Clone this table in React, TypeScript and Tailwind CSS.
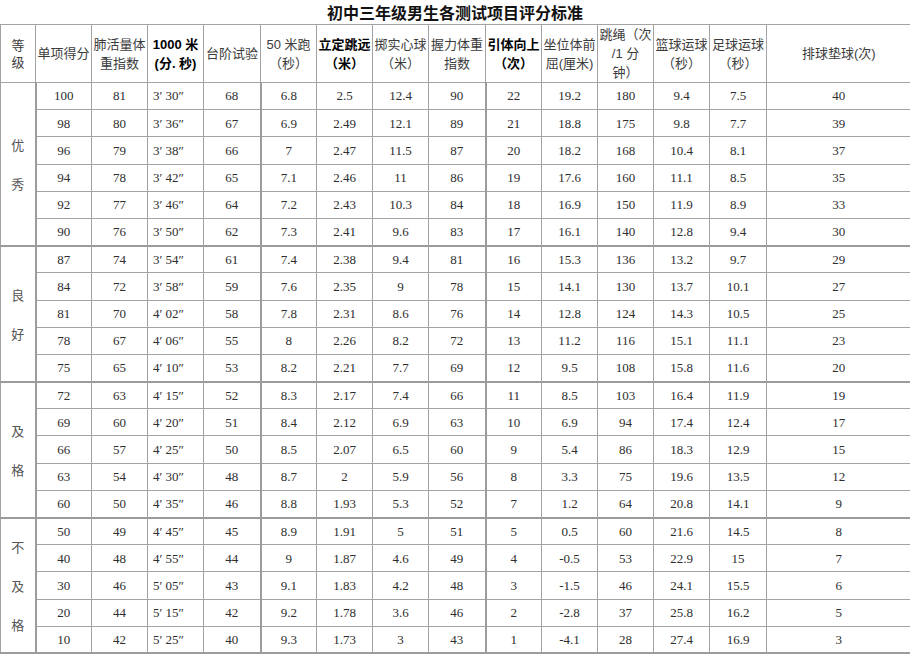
import type { ReactNode } from 'react'

type Group = {
  label: string[]
  rows: (string | number)[][]
}

const groups: Group[] = [
  {
    label: ['优', '秀'],
    rows: [
      [100, 81, '3′ 30″', 68, '6.8', '2.5', '12.4', 90, 22, '19.2', 180, '9.4', '7.5', 40],
      [98, 80, '3′ 36″', 67, '6.9', '2.49', '12.1', 89, 21, '18.8', 175, '9.8', '7.7', 39],
      [96, 79, '3′ 38″', 66, '7', '2.47', '11.5', 87, 20, '18.2', 168, '10.4', '8.1', 37],
      [94, 78, '3′ 42″', 65, '7.1', '2.46', '11', 86, 19, '17.6', 160, '11.1', '8.5', 35],
      [92, 77, '3′ 46″', 64, '7.2', '2.43', '10.3', 84, 18, '16.9', 150, '11.9', '8.9', 33],
      [90, 76, '3′ 50″', 62, '7.3', '2.41', '9.6', 83, 17, '16.1', 140, '12.8', '9.4', 30],
    ],
  },
  {
    label: ['良', '好'],
    rows: [
      [87, 74, '3′ 54″', 61, '7.4', '2.38', '9.4', 81, 16, '15.3', 136, '13.2', '9.7', 29],
      [84, 72, '3′ 58″', 59, '7.6', '2.35', '9', 78, 15, '14.1', 130, '13.7', '10.1', 27],
      [81, 70, '4′ 02″', 58, '7.8', '2.31', '8.6', 76, 14, '12.8', 124, '14.3', '10.5', 25],
      [78, 67, '4′ 06″', 55, '8', '2.26', '8.2', 72, 13, '11.2', 116, '15.1', '11.1', 23],
      [75, 65, '4′ 10″', 53, '8.2', '2.21', '7.7', 69, 12, '9.5', 108, '15.8', '11.6', 20],
    ],
  },
  {
    label: ['及', '格'],
    rows: [
      [72, 63, '4′ 15″', 52, '8.3', '2.17', '7.4', 66, 11, '8.5', 103, '16.4', '11.9', 19],
      [69, 60, '4′ 20″', 51, '8.4', '2.12', '6.9', 63, 10, '6.9', 94, '17.4', '12.4', 17],
      [66, 57, '4′ 25″', 50, '8.5', '2.07', '6.5', 60, 9, '5.4', 86, '18.3', '12.9', 15],
      [63, 54, '4′ 30″', 48, '8.7', '2', '5.9', 56, 8, '3.3', 75, '19.6', '13.5', 12],
      [60, 50, '4′ 35″', 46, '8.8', '1.93', '5.3', 52, 7, '1.2', 64, '20.8', '14.1', 9],
    ],
  },
  {
    label: ['不', '及', '格'],
    rows: [
      [50, 49, '4′ 45″', 45, '8.9', '1.91', '5', 51, 5, '0.5', 60, '21.6', '14.5', 8],
      [40, 48, '4′ 55″', 44, '9', '1.87', '4.6', 49, 4, '-0.5', 53, '22.9', '15', 7],
      [30, 46, '5′ 05″', 43, '9.1', '1.83', '4.2', 48, 3, '-1.5', 46, '24.1', '15.5', 6],
      [20, 44, '5′ 15″', 42, '9.2', '1.78', '3.6', 46, 2, '-2.8', 37, '25.8', '16.2', 5],
      [10, 42, '5′ 25″', 40, '9.3', '1.73', '3', 43, 1, '-4.1', 28, '27.4', '16.9', 3],
    ],
  },
]

function Head({ children, bold, last }: { children: ReactNode; bold?: boolean; last?: boolean }) {
  return (
    <th
      className={
        'border border-[#a3a3a3] p-0 text-center align-middle whitespace-nowrap text-[13px] leading-[19px] ' +
        (bold ? 'font-bold text-black ' : 'font-normal text-[#3c3c3c] ') +
        (last ? 'border-r-0' : '')
      }
    >
      {children}
    </th>
  )
}

function cellClass(j: number, first: boolean, lastRow: boolean) {
  let cls = 'border border-[#a3a3a3] p-0 align-middle whitespace-nowrap '
  cls += j === 2 ? 'text-left pl-[5px] ' : 'text-center '
  if (j === 0 || j === 4 || j === 8) cls += 'border-l-2 border-l-[#9c9c9c] '
  if (j === 13) cls += 'border-r-0 '
  if (first) cls += 'border-t-2 border-t-[#9c9c9c] '
  if (lastRow) cls += 'border-b-2 border-b-[#9c9c9c] '
  return cls
}

export default function App() {
  return (
    <div className="w-[910px] h-[655px] overflow-hidden bg-white font-['Liberation_Serif','Noto_Sans_CJK_SC',serif]">
      <h1 className="h-[24px] text-center text-[16px] leading-[24px] font-bold text-[#111] font-['Noto_Sans_CJK_SC',sans-serif]">
        初中三年级男生各测试项目评分标准
      </h1>

      <table className="table-fixed border-collapse w-[910px]">
        <colgroup>
          <col className="w-[35px]" />
          <col className="w-[56px]" />
          <col className="w-[56px]" />
          <col className="w-[56px]" />
          <col className="w-[57px]" />
          <col className="w-[56px]" />
          <col className="w-[56px]" />
          <col className="w-[56px]" />
          <col className="w-[57px]" />
          <col className="w-[56px]" />
          <col className="w-[56px]" />
          <col className="w-[56px]" />
          <col className="w-[56px]" />
          <col className="w-[57px]" />
          <col className="w-[144px]" />
        </colgroup>
        <thead className="font-['Liberation_Sans','Noto_Sans_CJK_SC',sans-serif]">
          <tr className="h-[58px]">
            <th className="border border-[#a3a3a3] p-0 text-center align-middle text-[13px] leading-[17px] font-normal text-[#3c3c3c]">
              等<br />级
            </th>
            <Head>单项得分</Head>
            <Head>肺活量体<br />重指数</Head>
            <Head bold>1000 米<br />(分. 秒)</Head>
            <Head>台阶试验</Head>
            <Head>50 米跑<br />（秒）</Head>
            <Head bold>立定跳远<br />（米）</Head>
            <Head>掷实心球<br />（米）</Head>
            <Head>握力体重<br />指数</Head>
            <Head bold>引体向上<br />（次）</Head>
            <Head>坐位体前<br />屈(厘米)</Head>
            <Head>跳绳（次<br />/1 分<br />钟）</Head>
            <Head>篮球运球<br />（秒）</Head>
            <Head>足球运球<br />（秒）</Head>
            <Head last>排球垫球(次)</Head>
          </tr>
        </thead>
        <tbody className="text-[13px] text-[#2e2e2e]">
          {groups.map((g, gi) =>
            g.rows.map((row, ri) => {
              const first = ri === 0 && gi > 0
              const lastRow = gi === groups.length - 1 && ri === g.rows.length - 1
              return (
                <tr key={`${gi}-${ri}`} className="h-[27.2px]">
                  {ri === 0 && (
                    <td
                      rowSpan={g.rows.length}
                      className={
                        'border border-[#a3a3a3] p-0 text-center align-middle text-[13px] leading-[39px] text-[#555] font-[\'Noto_Sans_CJK_SC\',sans-serif] ' +
                        (gi > 0 ? 'border-t-2 border-t-[#9c9c9c] ' : '') +
                        (gi === groups.length - 1 ? 'border-b-2 border-b-[#9c9c9c]' : '')
                      }
                    >
                      {g.label.map((c) => (
                        <div key={c}>{c}</div>
                      ))}
                    </td>
                  )}
                  {row.map((v, j) => (
                    <td key={j} className={cellClass(j, first, lastRow)}>
                      {v}
                    </td>
                  ))}
                </tr>
              )
            })
          )}
        </tbody>
      </table>
    </div>
  )
}
